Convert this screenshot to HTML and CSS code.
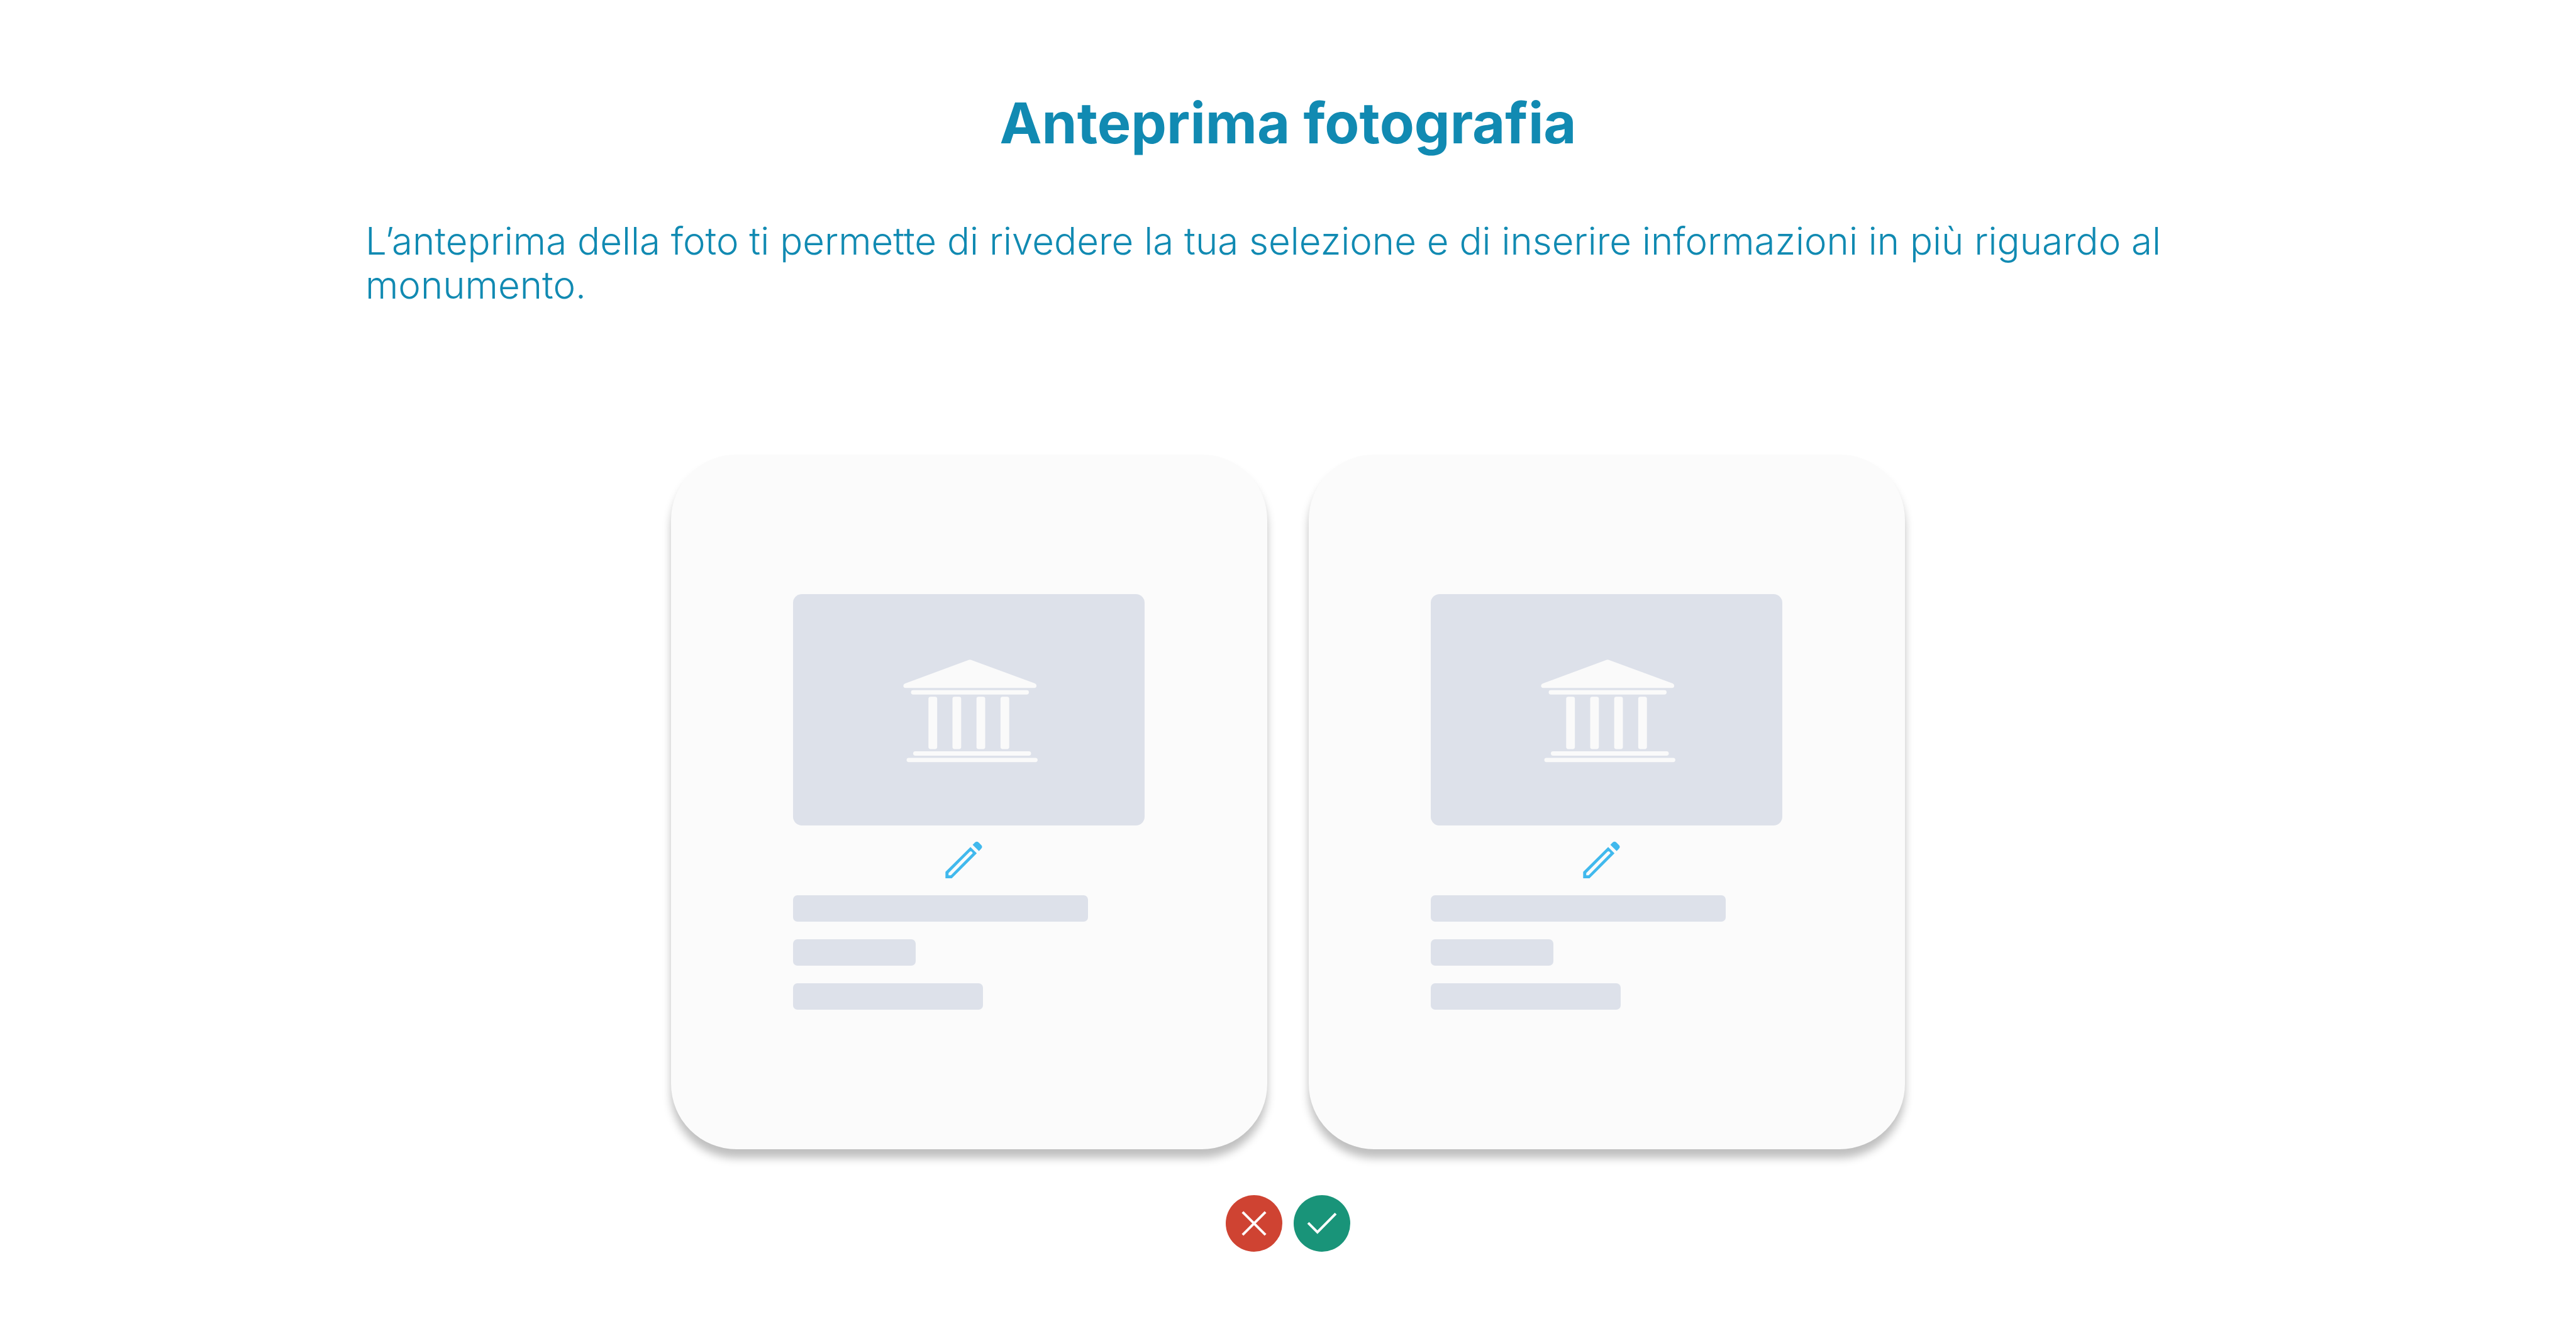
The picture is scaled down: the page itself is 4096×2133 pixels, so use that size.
FILE: index.html
```html
<!DOCTYPE html>
<html lang="it">
<head>
<meta charset="utf-8">
<meta name="viewport" content="width=device-width, initial-scale=1">
<title>Anteprima fotografia</title>
<link rel="stylesheet" href="styles.css">
</head>
<body>
<svg class="sprite" aria-hidden="true">
  <symbol id="museum" viewBox="-444 -216 1932 1272">
    <path d="M174 300Q162 300 162 288Q162 280 171 276L521 146Q528 143 535 146L885 275Q894 279 894 288Q894 300 882 300Z"/>
    <rect x="204" y="312" width="648" height="24" rx="12"/>
    <rect x="300" y="348" width="48" height="288" rx="12"/>
    <rect x="432" y="348" width="48" height="288" rx="12"/>
    <rect x="564" y="348" width="48" height="288" rx="12"/>
    <rect x="696" y="348" width="48" height="288" rx="12"/>
    <rect x="216" y="648" width="648" height="24" rx="12"/>
    <rect x="180" y="684" width="720" height="24" rx="12"/>
  </symbol>
  <symbol id="pencil" viewBox="138 24 288 288">
    <path fill-rule="evenodd" d="M153 231L291 94L326 129L188 267H153ZM170 238V250H183L303 129V126L295 118L288 119Z"/>
    <path d="M303 82L315 70Q326 60 337 70L350 83Q360 93 350 104L338 117Z"/>
  </symbol>
</svg>
<main class="page">
  <header class="intro">
    <h1 class="title">Anteprima fotografia</h1>
    <p class="lead">L’anteprima della foto ti permette di rivedere la tua selezione e di inserire informazioni in più riguardo al monumento.</p>
  </header>
  <section class="cards">
    <article class="card">
      <svg class="photo" viewBox="0 0 1932 1272" aria-hidden="true"><use href="#museum"/></svg>
      <button class="edit" type="button" aria-label="Modifica"><svg class="edit-icon" aria-hidden="true"><use href="#pencil"/></svg></button>
      <div class="lines">
        <div class="line line-long"></div>
        <div class="line line-short"></div>
        <div class="line line-medium"></div>
      </div>
    </article>
    <article class="card">
      <svg class="photo" viewBox="0 0 1932 1272" aria-hidden="true"><use href="#museum"/></svg>
      <button class="edit" type="button" aria-label="Modifica"><svg class="edit-icon" aria-hidden="true"><use href="#pencil"/></svg></button>
      <div class="lines">
        <div class="line line-long"></div>
        <div class="line line-short"></div>
        <div class="line line-medium"></div>
      </div>
    </article>
  </section>
  <div class="actions">
    <button class="action cancel" type="button" aria-label="Annulla">
      <svg viewBox="66 84 312 312" aria-hidden="true"><path d="M159 177L285 303M285 177L159 303"/></svg>
    </button>
    <button class="action confirm" type="button" aria-label="Conferma">
      <svg viewBox="438 84 312 312" aria-hidden="true"><path d="M518 237L569 288L670 186"/></svg>
    </button>
  </div>
</main>
</body>
</html>
```

FILE: styles.css
```css
* { box-sizing: border-box; }

body {
  margin: 0;
  background: #fff;
  color: #118ab2;
  font-family: Inter, "Open Sans", sans-serif;
}

.sprite {
  position: absolute;
  width: 0;
  height: 0;
}

.page {
  display: flex;
  flex-direction: column;
  align-items: center;
  padding: 144px 0;
}

.intro {
  width: 100%;
  padding: 0 581px;
}

.title {
  margin: 0;
  font-size: 90px;
  line-height: 104px;
  font-weight: 700;
  text-align: center;
}

.lead {
  margin: 100px 0 0;
  font-size: 60px;
  line-height: 70px;
  font-weight: 300;
}

.cards {
  display: flex;
  gap: 66px;
  margin-top: 235px;
}

.card {
  display: flex;
  flex-direction: column;
  width: 948px;
  padding: 222px 194px;
  border-radius: 104px;
  background: #fbfbfb;
  box-shadow: 0 14px 14px rgba(0, 0, 0, 0.25);
}

.photo {
  display: block;
  width: 559px;
  height: 368px;
  border-radius: 14px;
  background: #dde1ea;
  fill: #fafafa;
}

.edit {
  display: flex;
  align-items: center;
  justify-content: center;
  width: 559px;
  height: 111px;
  padding: 0;
  border: 0;
  background: none;
  cursor: pointer;
}

.edit-icon {
  width: 83px;
  height: 83px;
  fill: #41b9ed;
}

.lines {
  display: flex;
  flex-direction: column;
  gap: 28px;
}

.line {
  height: 42px;
  border-radius: 7px;
  background: #dde1ea;
}

.line-long { width: 469px; }
.line-short { width: 195px; }
.line-medium { width: 302px; }

.actions {
  display: flex;
  gap: 18px;
  margin-top: 73px;
}

.action {
  width: 90px;
  height: 90px;
  padding: 0;
  border: 0;
  border-radius: 50%;
  cursor: pointer;
}

.action svg {
  display: block;
  width: 100%;
  height: 100%;
  fill: none;
  stroke: #fff;
  stroke-width: 14;
}

.cancel { background: #cf4332; }
.confirm { background: #199479; }
```
